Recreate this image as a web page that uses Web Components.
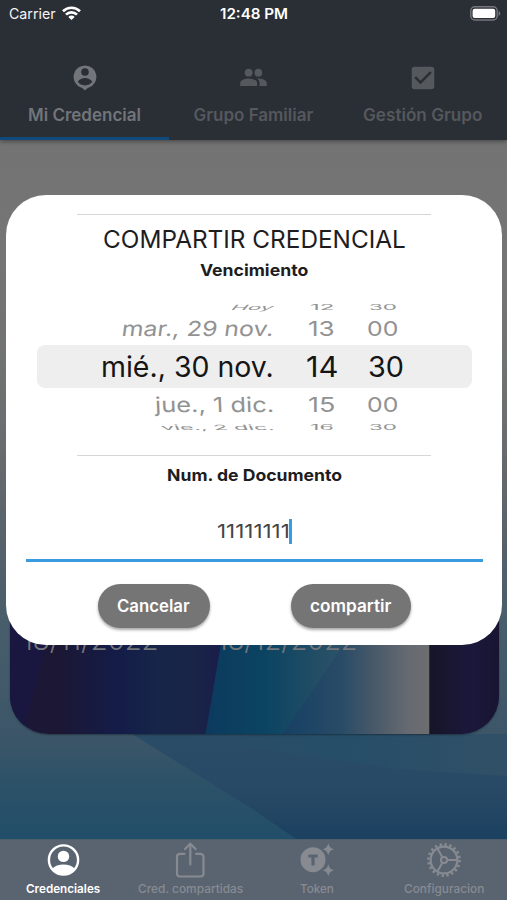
<!DOCTYPE html>
<html lang="es">
<head>
<meta charset="utf-8">
<title>Compartir credencial</title>
<style>
  body {
    margin: 0;
    width: 507px;
    height: 900px;
    overflow: hidden;
    font-family: Inter, 'Liberation Sans', sans-serif;
  }
</style>
</head>
<body>
<app-screen>
  <status-bar slot="top" carrier="Carrier" time="12:48 PM"></status-bar>
  <tab-bar slot="top">
    <tab-item label="Mi Credencial" size="113" active>
      <svg width="24" height="26" viewBox="0 0 24 26" fill="currentColor"><path fill-rule="evenodd" d="M12 .5a11.3 11.3 0 0 0-4 21.9c1.6.6 2.6 1.4 4 3.1 1.4-1.7 2.4-2.5 4-3.1A11.3 11.3 0 0 0 12 .5zM12 3.200a3.800 3.800 0 1 1 0 7.600 3.800 3.800 0 0 1 0-7.600zM4.700 16.800c1.800-2.500 4.600-3.700 7.300-3.700s5.500 1.200 7.300 3.700c-1.700 2.300-4.400 3.600-7.300 3.600s-5.600-1.300-7.300-3.600z"/></svg>
    </tab-item>
    <tab-item label="Grupo Familiar" size="120">
      <svg width="29" height="29" viewBox="0 0 24 24" fill="currentColor"><circle cx="8" cy="8" r="3.200"/><circle cx="16" cy="8" r="3.200"/><path d="M8 12.800c-2.400 0-7 1.200-7 3.600V19h14v-2.600c0-2.400-4.600-3.600-7-3.600zM16 12.800l-1 .1c1.200.8 2 2 2 3.500V19h6v-2.600c0-2.400-4.600-3.600-7-3.600z"/></svg>
    </tab-item>
    <tab-item label="Gestión Grupo" size="119">
      <svg width="30" height="30" viewBox="0 0 24 24" fill="currentColor"><path d="M19 3H5c-1.110 0-2 .9-2 2v14c0 1.100.89 2 2 2h14c1.110 0 2-.9 2-2V5c0-1.100-.89-2-2-2zm-9 14l-5-5 1.410-1.410L10 14.170l7.590-7.590L19 8l-9 9z"/></svg>
    </tab-item>
  </tab-bar>

  <credential-card desde="18/11/2022" hasta="18/12/2022"></credential-card>

  <nav-bar slot="bottom">
    <nav-item label="Credenciales" size="74" active>
      <svg width="36" height="36" viewBox="0 0 36 36"><circle cx="18.500" cy="18" r="14.600" fill="none" stroke="currentColor" stroke-width="2.400"/><circle cx="18.500" cy="14.400" r="5.700" fill="currentColor"/><path d="M7 27c2.500-3 7-4.400 11.500-4.400S27.500 24 30 27A14.500 14.500 0 0 1 7 27z" fill="currentColor"/></svg>
    </nav-item>
    <nav-item label="Cred. compartidas" size="105">
      <svg width="36" height="36" viewBox="0 0 36 36" fill="none" stroke="currentColor" stroke-width="2.200" stroke-linecap="round" stroke-linejoin="round"><path d="M12.500 11.800H8a3 3 0 0 0-3 3V31.500a3 3 0 0 0 3 3h20.500a3 3 0 0 0 3-3V14.800a3 3 0 0 0-3-3H24M18.300 22.500V2M13 7l5.300-5.300L23.600 7"/></svg>
    </nav-item>
    <nav-item label="Token" size="34">
      <svg width="36" height="36" viewBox="0 0 36 36" fill="currentColor"><path fill-rule="evenodd" d="M14 5.200a12.500 12.500 0 1 1 0 25 12.500 12.500 0 0 1 0-25zM9.300 12.500v3h3.100v8h3.200v-8h3.100v-3z"/><path d="M29.300 1c.8 4 2.300 5.500 6.300 6.300-4 .8-5.500 2.300-6.300 6.300-.8-4-2.300-5.500-6.300-6.300 4-.8 5.500-2.300 6.300-6.300zM29.300 22c.8 4 2.300 5.500 6.300 6.300-4 .8-5.500 2.300-6.300 6.300-.8-4-2.300-5.500-6.300-6.300 4-.8 5.500-2.300 6.300-6.300z"/></svg>
    </nav-item>
    <nav-item label="Configuracion" size="80">
      <svg width="36" height="36" viewBox="0 0 36 36" fill="none" stroke="currentColor"><circle cx="18" cy="18" r="15.600" stroke-width="2.600" stroke-dasharray="2.300 2.601"/><circle cx="18" cy="18" r="13.400" stroke-width="2.200"/><circle cx="18" cy="18" r="3.100" stroke-width="2"/><path stroke-width="2" d="M21.200 18H31M16.400 15.200L11.500 6.700M16.400 20.800l-4.900 8.500"/></svg>
    </nav-item>
  </nav-bar>

  <share-dialog slot="dialog" heading="COMPARTIR CREDENCIAL">
    <date-wheel slot="wheel"></date-wheel>
    <text-field slot="field" value="11111111"></text-field>
    <pill-button slot="actions" label="Cancelar" size="73"></pill-button>
    <pill-button slot="actions" label="compartir" size="81"></pill-button>
  </share-dialog>
</app-screen>

<script>
// One line of text, scaled horizontally so it takes exactly `size` pixels.
class FitText extends HTMLElement {
  constructor() {
    super();
    this.attachShadow({mode: 'open'});
    this.shadowRoot.innerHTML = `
      <style>
        :host { display: inline-block; white-space: nowrap; }
        span { display: inline-block; transform-origin: 0 50%; }
      </style>
      <span><slot></slot></span>
    `;
  }

  connectedCallback() {
    const size = Number(this.getAttribute('size'));
    const squash = this.getAttribute('squash') || 1;
    const skew = this.getAttribute('skew') || 0;
    const span = this.shadowRoot.querySelector('span');
    const natural = span.offsetWidth;
    this.style.width = size + 'px';
    if (natural) {
      span.style.transform = `scale(${size / natural}, ${squash}) skewX(${skew}deg)`;
    }
  }
}

class AppScreen extends HTMLElement {
  constructor() {
    super();
    this.attachShadow({mode: 'open'});
    this.shadowRoot.innerHTML = `
      <style>
        :host {
          display: flex;
          flex-direction: column;
          position: relative;
          width: 507px;
          height: 900px;
          overflow: hidden;
        }
        header {
          height: 140px;
          background: #2a2e35;
          box-shadow: 0 1px 5px rgba(0, 0, 0, .45);
          z-index: 1;
        }
        main {
          flex: 1;
          display: flex;
          flex-direction: column;
          justify-content: flex-end;
          position: relative;
          background: linear-gradient(#737373 0, #757575 100px, #717272 220px, #696b6d 310px, #57626b 400px, #475d6b 490px, #3b5568 605px, #2d5268 640px, #214e69 100%);
        }
        .waves { position: absolute; left: 0; bottom: 0; }
        .overlay {
          position: absolute;
          inset: 195px 5px auto 6px;
          z-index: 2;
        }
      </style>
      <header><slot name="top"></slot></header>
      <main>
        <svg class="waves" width="507" height="105" viewBox="0 0 507 105">
          <defs>
            <linearGradient id="deep" x1="0" y1="0" x2="0" y2="1">
              <stop offset="0" stop-color="#2b4c66"/>
              <stop offset=".5" stop-color="#294a66"/>
              <stop offset="1" stop-color="#1b4160"/>
            </linearGradient>
            <linearGradient id="light" x1="0" y1="0" x2="1" y2="0">
              <stop offset="0" stop-color="#2b4c66"/>
              <stop offset=".5" stop-color="#264e68"/>
              <stop offset="1" stop-color="#315067"/>
            </linearGradient>
          </defs>
          <path d="M132 0H507V105H296L254 76z" fill="url(#deep)"/>
          <path d="M180 0H507V42L400 35L253 14z" fill="url(#light)"/>
        </svg>
        <slot></slot>
      </main>
      <slot name="bottom"></slot>
      <div class="overlay"><slot name="dialog"></slot></div>
    `;
  }
}

class StatusBar extends HTMLElement {
  constructor() {
    super();
    this.attachShadow({mode: 'open'});
    this.shadowRoot.innerHTML = `
      <style>
        :host {
          display: grid;
          grid-template-columns: 1fr auto 1fr;
          align-items: center;
          height: 27px;
          margin-bottom: 1px;
          padding: 0 6px 0 9px;
          color: #f4f4f5;
          font-size: 14.5px;
        }
        .left { display: flex; align-items: center; gap: 6px; }
        .time { font-weight: 600; color: #fff; margin-left: -3px; }
        .battery { justify-self: end; }
        svg { display: block; margin-top: -1px; }
      </style>
      <div class="left">
        <fit-text size="47">${this.getAttribute('carrier')}</fit-text>
        <svg width="19" height="14" viewBox="0 0 19 14" fill="none" stroke="#fff" stroke-width="2.700"><path d="M1 5.200a12.200 12.200 0 0 1 17 0M4 8.600a7.800 7.800 0 0 1 11 0"/><path d="M9.500 14L6.300 10.900a4.600 4.600 0 0 1 6.400 0z" fill="#fff" stroke="none"/></svg>
      </div>
      <div class="time"><fit-text size="68">${this.getAttribute('time')}</fit-text></div>
      <svg class="battery" width="31" height="15" viewBox="0 0 31 15"><rect x=".8" y=".8" width="26.400" height="13.200" rx="4" fill="none" stroke="#75777c" stroke-width="1.400"/><rect x="2.600" y="2.700" width="22.600" height="9.400" rx="2" fill="#fff"/><path d="M28.600 5v5c1-.4 1.700-1.300 1.700-2.500S29.600 5.400 28.600 5z" fill="#75777c"/></svg>
    `;
  }
}

class TabBar extends HTMLElement {
  constructor() {
    super();
    this.attachShadow({mode: 'open'});
    this.shadowRoot.innerHTML = `
      <style>
        :host { display: grid; grid-template-columns: repeat(3, 1fr); height: 112px; }
      </style>
      <slot></slot>
    `;
  }
}

class TabItem extends HTMLElement {
  constructor() {
    super();
    this.attachShadow({mode: 'open'});
    this.shadowRoot.innerHTML = `
      <style>
        :host {
          display: flex;
          flex-direction: column;
          align-items: center;
          box-sizing: border-box;
          padding-top: 34px;
          border-bottom: 3px solid transparent;
          color: #55585d;
          font-size: 17px;
          font-weight: 600;
        }
        :host([active]) { color: #72757a; border-color: #104a7c; }
        .icon { display: flex; align-items: center; height: 31px; }
        .label { line-height: 20px; margin-top: 11.500px; }
      </style>
      <div class="icon"><slot></slot></div>
      <div class="label"><fit-text size="${this.getAttribute('size')}">${this.getAttribute('label')}</fit-text></div>
    `;
  }
}

class CredentialCard extends HTMLElement {
  constructor() {
    super();
    this.attachShadow({mode: 'open'});
    this.shadowRoot.innerHTML = `
      <style>
        :host {
          display: block;
          position: relative;
          height: 300px;
          margin: 0 8.500px 105px 9.500px;
          border-radius: 38px;
          overflow: hidden;
          box-shadow: 0 1px 2px rgba(0, 0, 0, .35);
        }
        svg { position: absolute; inset: 0; }
        .dates {
          position: relative;
          display: flex;
          box-sizing: border-box;
          height: 100%;
          align-items: flex-end;
          gap: 58px;
          padding: 0 0 78px 12px;
          color: #73767c;
          font-size: 27px;
          line-height: 30px;
          font-weight: 300;
        }
      </style>
      <svg width="489" height="300" viewBox="0 0 489 300">
        <defs>
          <linearGradient id="a"><stop offset="0" stop-color="#1b1738"/><stop offset=".09" stop-color="#1c1733"/><stop offset=".22" stop-color="#141c48"/><stop offset=".3" stop-color="#162549"/><stop offset=".38" stop-color="#192448"/><stop offset=".45" stop-color="#1a1b4b"/><stop offset="1" stop-color="#1a1b4b"/></linearGradient>
          <linearGradient id="b"><stop offset="0" stop-color="#0c3a5e"/><stop offset=".4" stop-color="#0b4462"/><stop offset=".8" stop-color="#264f66"/><stop offset="1" stop-color="#305468"/></linearGradient>
          <linearGradient id="c"><stop offset="0" stop-color="#164064"/><stop offset=".4" stop-color="#294b67"/><stop offset=".65" stop-color="#4c5b69"/><stop offset=".85" stop-color="#666a71"/><stop offset="1" stop-color="#6c6d70"/></linearGradient>
          <linearGradient id="d"><stop offset="0" stop-color="#171529"/><stop offset=".6" stop-color="#1b183b"/><stop offset="1" stop-color="#181432"/></linearGradient>
        </defs>
        <path d="M0 0H489V300H0z" fill="url(#a)"/>
        <path d="M12 300L42 190H0V300z" fill="#191740"/>
        <path d="M211 210H345L273 300H195.500z" fill="url(#b)"/>
        <path d="M334 210H419.500V300H273z" fill="url(#c)"/>
        <path d="M419.500 0H489V300H419.500z" fill="url(#d)"/>
      </svg>
      <div class="dates">
        <fit-text size="137">${this.getAttribute('desde')}</fit-text>
        <fit-text size="141">${this.getAttribute('hasta')}</fit-text>
      </div>
    `;
  }
}

class NavBar extends HTMLElement {
  constructor() {
    super();
    this.attachShadow({mode: 'open'});
    this.shadowRoot.innerHTML = `
      <style>
        :host {
          display: grid;
          grid-template-columns: repeat(4, 1fr);
          box-sizing: border-box;
          height: 61px;
          background: #5a6471;
          border-top: 1px solid #505d6b;
        }
      </style>
      <slot></slot>
    `;
  }
}

class NavItem extends HTMLElement {
  constructor() {
    super();
    this.attachShadow({mode: 'open'});
    this.shadowRoot.innerHTML = `
      <style>
        :host {
          display: flex;
          flex-direction: column;
          align-items: center;
          padding-top: 2px;
          color: #878b91;
          font-size: 12px;
          font-weight: 500;
        }
        :host([active]) { color: #fff; font-weight: 600; }
        .icon { height: 36px; }
        .label { line-height: 16px; margin-top: 2.500px; }
      </style>
      <div class="icon"><slot></slot></div>
      <div class="label"><fit-text size="${this.getAttribute('size')}">${this.getAttribute('label')}</fit-text></div>
    `;
  }
}

class ShareDialog extends HTMLElement {
  constructor() {
    super();
    this.attachShadow({mode: 'open'});
    this.shadowRoot.innerHTML = `
      <style>
        :host {
          display: flex;
          flex-direction: column;
          align-items: center;
          box-sizing: border-box;
          height: 449.500px;
          padding-top: 19px;
          border-radius: 40px;
          background: #fff;
          color: #1d1d1f;
        }
        hr { width: 354px; height: 1px; margin: 0; border: 0; background: #d6d6d6; }
        h1 { margin: 8px 0 0; font-size: 24.500px; line-height: 32px; font-weight: 400; }
        h2 { margin: 5px 0 0; font-size: 16.500px; line-height: 20px; font-weight: 700; }
        .wheel { width: 435px; height: 135px; margin: 19px 0 21px; }
        .document { margin-top: 9px; }
        .actions { display: flex; gap: 81px; margin: 22px 0 0; }
      </style>
      <hr>
      <h1><fit-text size="303">${this.getAttribute('heading')}</fit-text></h1>
      <h2><fit-text size="108">Vencimiento</fit-text></h2>
      <div class="wheel"><slot name="wheel"></slot></div>
      <hr>
      <h2 class="document"><fit-text size="175">Num. de Documento</fit-text></h2>
      <slot name="field"></slot>
      <div class="actions"><slot name="actions"></slot></div>
    `;
  }
}

class DateWheel extends HTMLElement {
  constructor() {
    super();
    this.attachShadow({mode: 'open'});
    // [text, width] for each column, then the row's height, vertical squash and skew
    const rows = [
      {cells: [['Hoy', 42], ['12', 24], ['30', 28]], height: 15, squash: .26, skew: -16},
      {cells: [['mar., 29 nov.', 152], ['13', 27], ['00', 31]], height: 30, squash: .74, skew: -6},
      {cells: [['mié., 30 nov.', 173], ['14', 32], ['30', 36]], height: 43, squash: 1, skew: 0, selected: true},
      {cells: [['jue., 1 dic.', 119], ['15', 27], ['00', 31]], height: 33, squash: .74, skew: 2},
      {cells: [['vie., 2 dic.', 113], ['16', 24], ['30', 28]], height: 11, squash: .26, skew: 8}
    ];

    this.shadowRoot.innerHTML = `
      <style>
        :host { display: block; color: #929292; font-size: 28px; }
        .row {
          display: grid;
          grid-template-columns: 237px 96px 26px;
          align-items: center;
          line-height: 0;
        }
        .row > * { line-height: 34px; }
        .row > :nth-child(1) { justify-self: end; }
        .row > :nth-child(2), .row > :nth-child(3) { justify-self: center; }
        .selected { margin-top: 1px; color: #151515; background: #eee; border-radius: 8px; }
        .selected > :nth-child(3) { margin-left: 7px; }
      </style>
      ${rows.map(row => `
        <div class="row ${row.selected ? 'selected' : ''}" style="height: ${row.height}px; grid-template-rows: ${row.height}px">
          ${row.cells.map(([text, size], i) => `<fit-text size="${size}" squash="${row.squash}" skew="${i ? 0 : row.skew}">${text}</fit-text>`).join('')}
        </div>
      `).join('')}
    `;
  }
}

class TextField extends HTMLElement {
  constructor() {
    super();
    this.attachShadow({mode: 'open'});
    this.shadowRoot.innerHTML = `
      <style>
        :host {
          display: flex;
          justify-content: center;
          align-items: center;
          box-sizing: border-box;
          width: 457px;
          height: 77px;
          padding-top: 18px;
          border-bottom: 3px solid #3b9be0;
          color: #454545;
          font-size: 19px;
        }
        i { width: 3px; height: 25px; margin-left: -1px; background: #3b9be0; }
      </style>
      <fit-text size="73">${this.getAttribute('value')}</fit-text><i></i>
    `;
  }
}

class PillButton extends HTMLElement {
  constructor() {
    super();
    this.attachShadow({mode: 'open'});
    this.shadowRoot.innerHTML = `
      <style>
        :host {
          display: block;
          padding: 0 19.500px;
          border-radius: 22px;
          background: #757575;
          box-shadow: 0 2px 3px rgba(0, 0, 0, .35);
          color: #fff;
          font-size: 17px;
          font-weight: 600;
          line-height: 44px;
        }
      </style>
      <fit-text size="${this.getAttribute('size')}">${this.getAttribute('label')}</fit-text>
    `;
  }
}

customElements.define('app-screen', AppScreen);
customElements.define('status-bar', StatusBar);
customElements.define('tab-bar', TabBar);
customElements.define('tab-item', TabItem);
customElements.define('credential-card', CredentialCard);
customElements.define('nav-bar', NavBar);
customElements.define('nav-item', NavItem);
customElements.define('share-dialog', ShareDialog);
customElements.define('date-wheel', DateWheel);
customElements.define('text-field', TextField);
customElements.define('pill-button', PillButton);
customElements.define('fit-text', FitText);
</script>
</body>
</html>
